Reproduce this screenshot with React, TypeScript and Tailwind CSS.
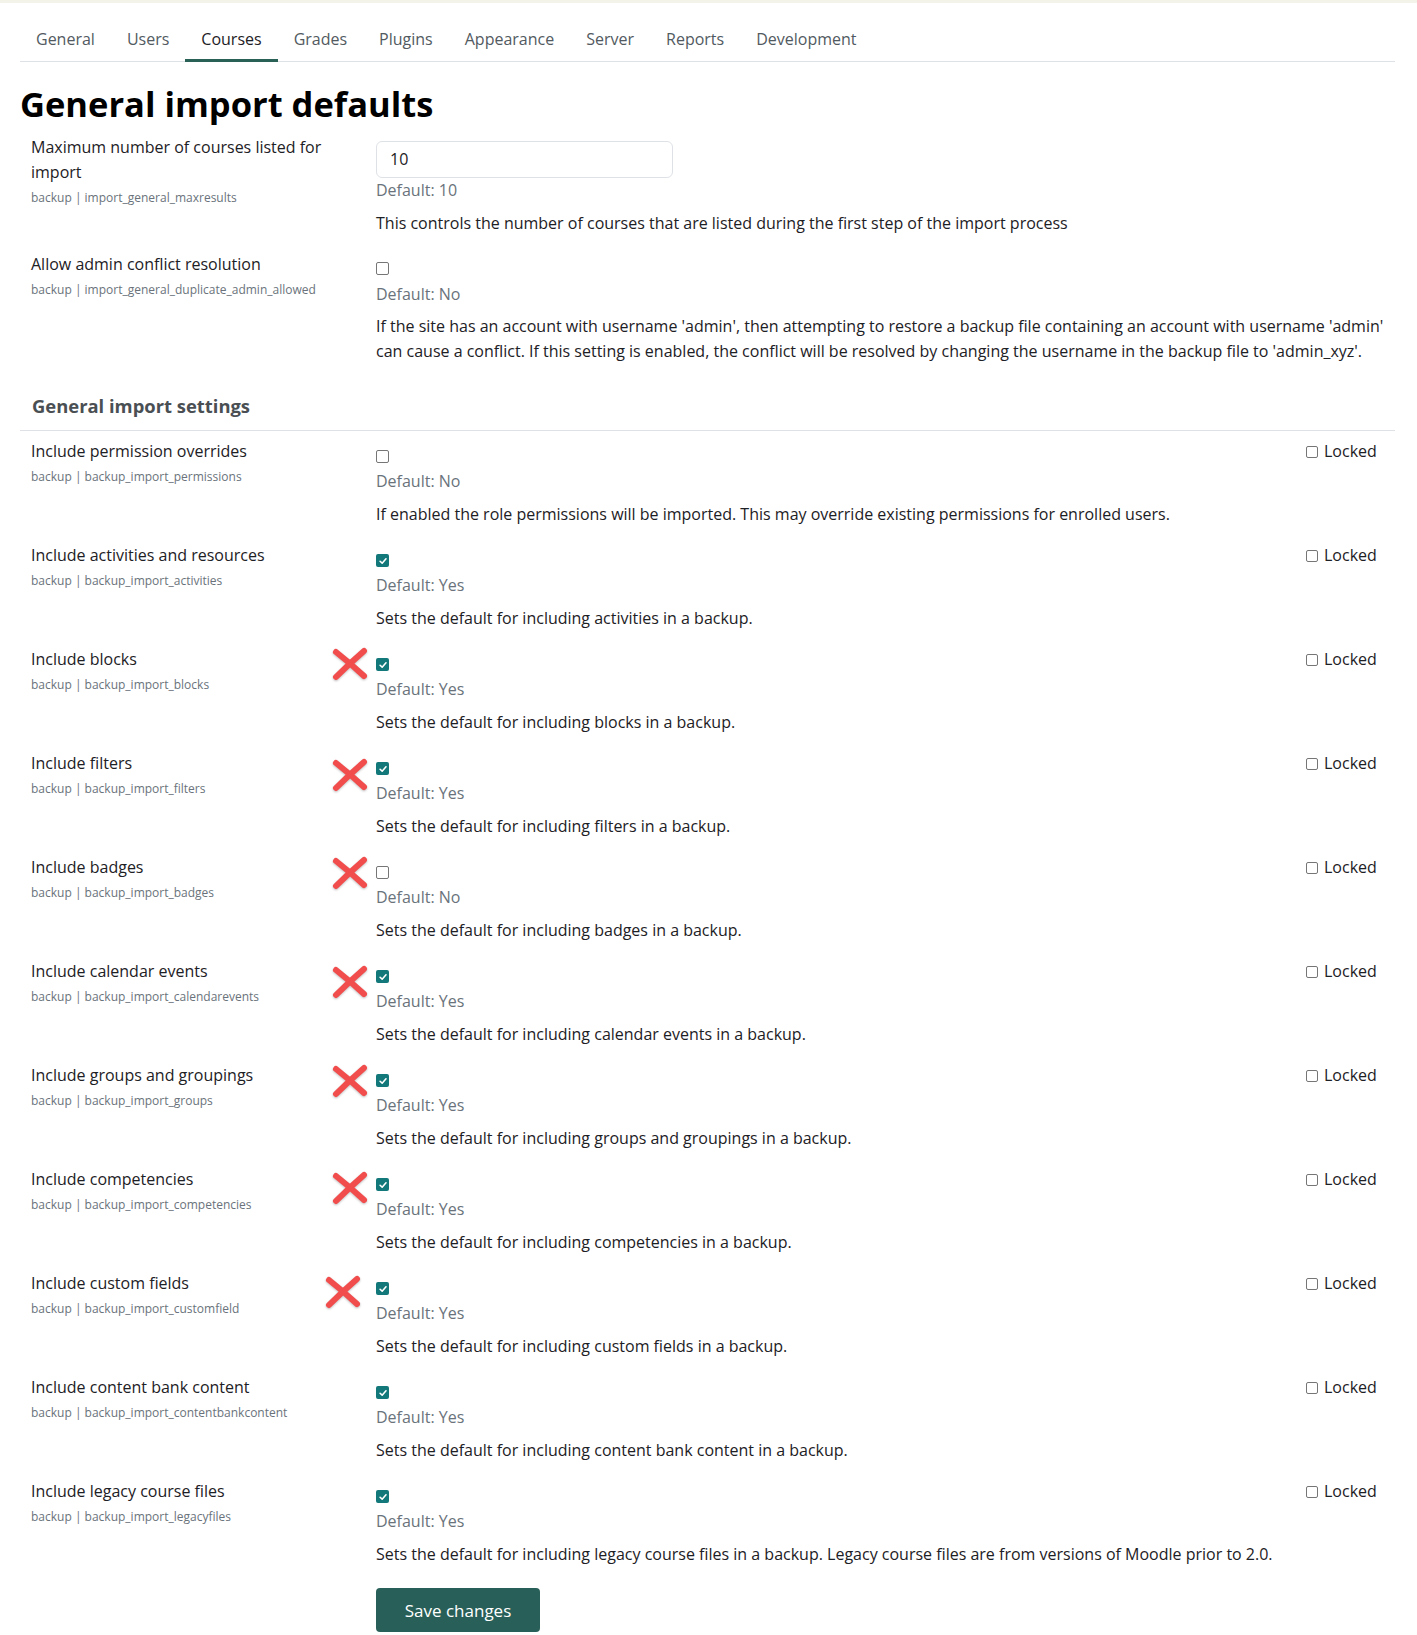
import React from 'react';

const tabs = ['General', 'Users', 'Courses', 'Grades', 'Plugins', 'Appearance', 'Server', 'Reports', 'Development'];

interface Setting {
  label: string;
  name: string;
  checked: boolean;
  desc: string;
  mark?: { dx: number; dy: number };
}

const settings: Setting[] = [
  { label: 'Include permission overrides', name: 'backup_import_permissions', checked: false, desc: 'If enabled the role permissions will be imported. This may override existing permissions for enrolled users.' },
  { label: 'Include activities and resources', name: 'backup_import_activities', checked: true, desc: 'Sets the default for including activities in a backup.' },
  { label: 'Include blocks', name: 'backup_import_blocks', checked: true, desc: 'Sets the default for including blocks in a backup.', mark: { dx: 311, dy: 4 } },
  { label: 'Include filters', name: 'backup_import_filters', checked: true, desc: 'Sets the default for including filters in a backup.', mark: { dx: 311, dy: 11 } },
  { label: 'Include badges', name: 'backup_import_badges', checked: false, desc: 'Sets the default for including badges in a backup.', mark: { dx: 311, dy: 5 } },
  { label: 'Include calendar events', name: 'backup_import_calendarevents', checked: true, desc: 'Sets the default for including calendar events in a backup.', mark: { dx: 311, dy: 10 } },
  { label: 'Include groups and groupings', name: 'backup_import_groups', checked: true, desc: 'Sets the default for including groups and groupings in a backup.', mark: { dx: 311, dy: 5 } },
  { label: 'Include competencies', name: 'backup_import_competencies', checked: true, desc: 'Sets the default for including competencies in a backup.', mark: { dx: 311, dy: 8 } },
  { label: 'Include custom fields', name: 'backup_import_customfield', checked: true, desc: 'Sets the default for including custom fields in a backup.', mark: { dx: 304, dy: 8 } },
  { label: 'Include content bank content', name: 'backup_import_contentbankcontent', checked: true, desc: 'Sets the default for including content bank content in a backup.' },
  { label: 'Include legacy course files', name: 'backup_import_legacyfiles', checked: true, desc: 'Sets the default for including legacy course files in a backup. Legacy course files are from versions of Moodle prior to 2.0.' },
];

function Checkbox({ checked }: { checked: boolean }) {
  if (checked) {
    return (
      <span className="flex h-[13px] w-[13px] items-center justify-center rounded-[2px] bg-[#137879]">
        <svg viewBox="0 0 12 12" className="h-[10px] w-[10px]">
          <path d="M2.5 6.3 L5 8.6 L9.6 3.4" fill="none" stroke="#fff" strokeWidth="1.9" strokeLinecap="round" strokeLinejoin="round" />
        </svg>
      </span>
    );
  }
  return <span className="block h-[13px] w-[13px] rounded-[2px] border border-[#767676] bg-white" />;
}

// red annotation cross drawn over the form
function RedMark() {
  return (
    <svg viewBox="0 0 38 34" className="h-[34px] w-[38px] drop-shadow-[0_1px_1px_rgba(0,0,0,0.25)]">
      <path d="M5 5 Q19 16 33 29" stroke="#f24d4d" strokeWidth="6" strokeLinecap="round" fill="none" />
      <path d="M33 4 Q18 17 5 30" stroke="#f24d4d" strokeWidth="6" strokeLinecap="round" fill="none" />
    </svg>
  );
}

function Meta({ name }: { name: string }) {
  return (
    <div className="mt-1 text-[12px] leading-[18px] text-[#6a737b]">
      backup | {name}
    </div>
  );
}

export default function App() {
  return (
    <div className="min-h-[1635px] bg-white text-[16px] leading-[25px] text-[#1d2125]" style={{ fontFamily: '"Open Sans", "Noto Sans", sans-serif' }}>
      <div className="h-[3px] bg-[#f4f3ea]" />
      <div className="ml-[20px] mr-[22px]">
        {/* Tabs */}
        <nav className="mt-[24px] flex border-b border-[#dee2e6]">
          {tabs.map((t) => (
            <div
              key={t}
              className={`-mb-px px-4 pb-[7px] border-b-[3px] ${t === 'Courses' ? 'border-[#2a6157] text-[#1d2125]' : 'border-transparent text-[#525a61]'}`}
            >
              {t}
            </div>
          ))}
        </nav>

        {/* Heading */}
        <h2 className="mt-[18px] text-[34.5px] font-bold leading-[47px] text-black">General import defaults</h2>

        {/* Max results */}
        <div className="flex pt-2 pb-2">
          <div className="w-[356px] shrink-0 pl-[11px] pr-6">
            <div>Maximum number of courses listed for import</div>
            <Meta name="import_general_maxresults" />
          </div>
          <div className="flex-1">
            <div className="mt-[6px] flex h-[37px] w-[297px] items-center rounded-[6px] border border-[#dee2e6] px-[13px]">10</div>
            <div className="text-[#6a737b]">Default: 10</div>
            <div className="mt-2">This controls the number of courses that are listed during the first step of the import process</div>
          </div>
        </div>

        {/* Admin conflict */}
        <div className="flex pt-2 pb-2">
          <div className="w-[356px] shrink-0 pl-[11px] pr-4">
            <div>Allow admin conflict resolution</div>
            <Meta name="import_general_duplicate_admin_allowed" />
          </div>
          <div className="flex-1 pr-[2px]">
            <div className="mt-[10px]">
              <Checkbox checked={false} />
            </div>
            <div className="mt-[7px] text-[#6a737b]">Default: No</div>
            <div className="mt-[7px]">
              If the site has an account with username 'admin', then attempting to restore a backup file containing an account with username 'admin' can cause a conflict. If this setting is enabled, the conflict will be resolved by changing the username in the backup file to 'admin_xyz'.
            </div>
          </div>
        </div>

        {/* Section */}
        <h3 className="mt-[20px] border-b border-[#dee2e6] pb-[10px] pl-[12px] text-[18.4px] font-bold leading-[28px] text-[#4a4f54]">
          General import settings
        </h3>

        <div>
          {settings.map((s) => (
            <div key={s.name} className="relative flex pt-2 pb-2">
              <div className="w-[356px] shrink-0 pl-[11px] pr-4">
                <div>{s.label}</div>
                <Meta name={s.name} />
              </div>
              <div className="flex-1">
                <div className="mt-[11px]">
                  <Checkbox checked={s.checked} />
                </div>
                <div className="mt-[6px] text-[#6a737b]">Default: {s.checked ? 'Yes' : 'No'}</div>
                <div className="mt-2">{s.desc}</div>
              </div>
              <div className="flex w-[89px] shrink-0 items-start">
                <div className="flex items-center gap-[6px]">
                  <span className="block h-[12px] w-[12px] rounded-[2px] border border-[#767676] bg-white" />
                  <span>Locked</span>
                </div>
              </div>
              {s.mark && (
                <div className="absolute" style={{ left: s.mark.dx, top: 4 + s.mark.dy }}>
                  <RedMark />
                </div>
              )}
            </div>
          ))}
        </div>

        <div className="pl-[356px] pt-[13px]">
          <button className="h-[44px] w-[164px] rounded-[4px] bg-[#285f58] text-[17px] text-white">Save changes</button>
        </div>
      </div>
    </div>
  );
}
